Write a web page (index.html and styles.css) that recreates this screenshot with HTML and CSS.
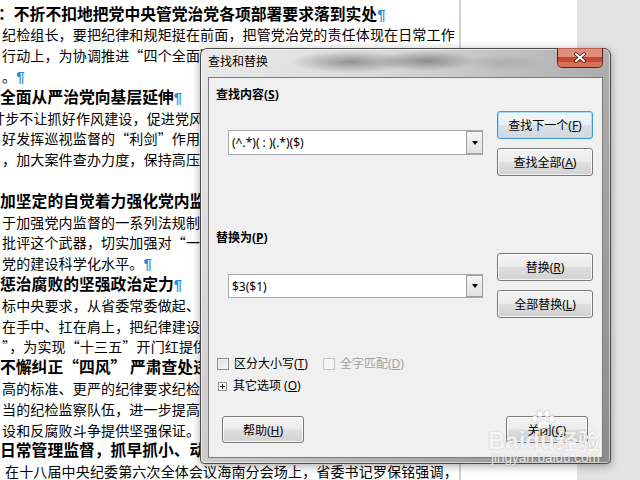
FILE: index.html
```html
<!DOCTYPE html>
<html lang="zh-CN">
<head>
  <meta charset="UTF-8">
  <title>查找和替换</title>
  <link rel="stylesheet" href="styles.css">
</head>
<body>
  <!-- Document behind the dialog -->
  <div class="screen">
    <div class="page">
      <p class="h lead">：不折不扣地把党中央管党治党各项部署要求落到实处<span class="pm">¶</span></p>
      <p>纪检组长，要把纪律和规矩挺在前面，把管党治党的责任体现在日常工作</p>
      <p>行动上，为协调推进“四个全面”战略布局提供坚强的纪律保障和政治保证</p>
      <p>。<span class="pm">¶</span></p>
      <p class="h">全面从严治党向基层延伸<span class="pm">¶</span></p>
      <p class="cut">寸步不让抓好作风建设，促进党风政风持续好转，营造风清气正的政治生态</p>
      <p>好发挥巡视监督的“利剑”作用，深化政治巡视，做到全覆盖、无死角</p>
      <p>，加大案件查办力度，保持高压态势，坚决遏制腐败现象蔓延势头</p>
      <p class="blank"></p>
      <p class="h">加坚定的自觉着力强化党内监督<span class="pm">¶</span></p>
      <p>于加强党内监督的一系列法规制度，用好批评和自我批评这个武器</p>
      <p>批评这个武器，切实加强对“一把手”和领导班子的监督，不断提高</p>
      <p>党的建设科学化水平。<span class="pm">¶</span></p>
      <p class="h">惩治腐败的坚强政治定力<span class="pm">¶</span></p>
      <p>标中央要求，从省委常委做起、从各级领导干部抓起，切实把管党治党</p>
      <p>在手中、扛在肩上，把纪律建设摆在更加突出位置，为全省经济社会发展</p>
      <p>”，为实现“十三五”开门红提供坚强有力的纪律保障。</p>
      <p class="h">不懈纠正“四风” 严肃查处违纪违法案件<span class="pm">¶</span></p>
      <p>高的标准、更严的纪律要求纪检监察干部，打造一支忠诚干净担当的队伍</p>
      <p>当的纪检监察队伍，进一步提高履职能力，为全面从严治党</p>
      <p>设和反腐败斗争提供坚强保证。<span class="pm">¶</span></p>
      <p class="h">日常管理监督，抓早抓小、动辄则咎<span class="pm">¶</span></p>
      <p class="last">在十八届中央纪委第六次全体会议海南分会场上，省委书记罗保铭强调，</p>
    </div>
    <div class="edge"></div>
    <div class="margin"></div>
    <div class="gutter"></div>
  </div>

  <!-- Find and replace dialog -->
  <div class="dialog">
    <div class="titlebar">
      <span class="title">查找和替换</span>
      <svg class="caption-x" width="46" height="20" viewBox="0 0 46 20">
        <path d="M0.5 0 V14.5 Q0.5 19.5 5.5 19.5 H40.5 Q45.5 19.5 45.5 14.5 V0 Z" fill="#c9492f" stroke="#5c2218"/>
        <path d="M1 0.5 H45 V9 H1 Z" fill="#de8d7a"/>
        <path d="M1 14 H45 V15 Q45 19 41 19 H5 Q1 19 1 15 Z" fill="#d8705a"/>
        <path d="M19 6 L27 13 M27 6 L19 13" stroke="#4a1911" stroke-width="3.6" stroke-linecap="round"/>
        <path d="M19 6 L27 13 M27 6 L19 13" stroke="#ffffff" stroke-width="2" stroke-linecap="round"/>
      </svg>
    </div>
    <div class="client">
      <div class="main">
        <div class="fields">
          <div class="label">查找内容(<u>S</u>)</div>
          <div class="combo find">
            <span class="value">(^.*)( : )(.*)($)</span>
            <span class="drop"><i></i></span>
          </div>
          <div class="label replace-label">替换为(<u>P</u>)</div>
          <div class="combo replace">
            <span class="value">$3($1)</span>
            <span class="drop"><i></i></span>
          </div>
          <div class="checks">
            <label class="check"><span class="box"></span><span>区分大小写(<u>T</u>)</span></label>
            <label class="check disabled"><span class="box"></span><span>全字匹配(<u>D</u>)</span></label>
          </div>
          <div class="more">
            <svg width="9" height="9" viewBox="0 0 9 9">
              <rect x="0.5" y="0.5" width="8" height="8" fill="#fafafa" stroke="#8f8f8f"/>
              <path d="M2 4.5 H7 M4.5 2 V7" stroke="#222" stroke-width="1"/>
            </svg>
            <span>其它选项 (<u>O</u>)</span>
          </div>
        </div>
        <div class="actions">
          <button class="btn default" type="button"><span>查找下一个(<u>F</u>)</span></button>
          <button class="btn" type="button"><span>查找全部(<u>A</u>)</span></button>
          <button class="btn gap" type="button"><span>替换(<u>R</u>)</span></button>
          <button class="btn" type="button"><span>全部替换(<u>L</u>)</span></button>
        </div>
      </div>
      <div class="footer">
        <button class="btn small" type="button"><span>帮助(<u>H</u>)</span></button>
        <button class="btn small" type="button"><span>关闭(<u>C</u>)</span></button>
      </div>
    </div>
  </div>

  <!-- Site watermark -->
  <div class="watermark">
    <svg class="paw" width="27" height="20" viewBox="0 0 27 20">
      <g fill="#fff" stroke="rgba(0,0,0,0.14)" stroke-width="1">
        <ellipse cx="5" cy="9" rx="3" ry="3.6"/>
        <ellipse cx="10" cy="3.8" rx="3" ry="3.4"/>
        <ellipse cx="17" cy="3.8" rx="3" ry="3.4"/>
        <ellipse cx="22" cy="9" rx="3" ry="3.6"/>
        <path d="M13.5 10 C9 10 6.5 15 8 18 C9.5 20 12 18.6 13.5 18.6 C15 18.6 17.5 20 19 18 C20.5 15 18 10 13.5 10 Z"/>
      </g>
    </svg>
    <div class="wm-logo"><span class="wm-bai">Baidu</span><span class="wm-jy">经验</span></div>
    <div class="wm-url">jingyan.baidu.com</div>
  </div>
</body>
</html>
```

FILE: styles.css
```css
html, body {
  margin: 0;
  padding: 0;
}

* {
  box-sizing: border-box;
}

body {
  width: 640px;
  height: 480px;
  overflow: hidden;
  position: relative;
  background: #e3e3e3;
}

/* Document page */
.screen {
  display: flex;
  width: 640px;
  height: 480px;
}

.page {
  width: 459px;
  flex: none;
  overflow: hidden;
  background: #fff;
  padding: 3.6px 0 0 2px;
  font-family: "Noto Sans CJK SC", sans-serif;
  font-size: 14px;
  letter-spacing: 0.15px;
  color: #000;
}
.page p {
  margin: 0;
  height: 20.8px;
  line-height: 20.8px;
  white-space: nowrap;
}
.page .h {
  font-size: 15.8px;
  font-weight: 700;
  letter-spacing: 0;
  margin-left: -2px;
}
.page .lead {
  margin-left: -4px;
}
.page .cut {
  margin-left: -11px;
}
.page .last {
  padding-left: 3px;
}
.pm {
  color: #2e8bd8;
  font-family: "Liberation Sans", sans-serif;
  font-weight: 700;
  font-size: 15px;
}

.edge {
  width: 2px;
  background: #d2d2d2;
}
.margin {
  width: 116px;
  background: #fff;
}
.gutter {
  flex: 1;
  background: #e3e3e3;
}

/* Dialog window */
.dialog {
  position: absolute;
  left: 200px;
  top: 48px;
  width: 411px;
  height: 416px;
  display: flex;
  flex-direction: column;
  border: 1px solid #4b4b4b;
  border-radius: 7px 7px 4px 4px;
  background:
    linear-gradient(to right, rgba(255, 255, 255, 0.35), rgba(255, 255, 255, 0) 40%, rgba(0, 0, 0, 0.22)),
    linear-gradient(#dedede, #b2b2b2);
  box-shadow: inset 0 0 0 1px rgba(255, 255, 255, 0.55), 0 2px 8px rgba(0, 0, 0, 0.35);
  font-family: "Noto Sans", "Noto Sans CJK SC", sans-serif;
  font-size: 12px;
  color: #000;
}

.titlebar {
  height: 28px;
  flex: none;
  display: flex;
  align-items: center;
  padding: 0 7px 2px 7px;
  border-radius: 6px 6px 0 0;
  background:
    radial-gradient(ellipse 60px 11px at 150px 13px, rgba(70, 70, 70, 0.5), transparent),
    radial-gradient(ellipse 50px 10px at 225px 12px, rgba(70, 70, 70, 0.5), transparent),
    radial-gradient(ellipse 40px 8px at 300px 14px, rgba(90, 90, 90, 0.2), transparent);
}
.title {
  line-height: 16px;
  text-shadow: 0 0 6px rgba(255, 255, 255, 0.9);
}
.caption-x {
  display: block;
  flex: none;
  margin: -1px 0 0 auto;
  align-self: flex-start;
}

.client {
  flex: 1;
  margin: 0 7px 5px;
  border: 1px solid #7b7b7b;
  background: #f0f0f0;
  display: flex;
  flex-direction: column;
  padding: 9px 9px 14px 7px;
}

.main {
  display: flex;
}

.fields {
  flex: 1;
  display: flex;
  flex-direction: column;
  align-items: flex-start;
}

.label {
  font-weight: 700;
  height: 16px;
  line-height: 16px;
}
.replace-label {
  margin-top: 75px;
}

.combo {
  margin: 27px 0 0 12px;
  width: 255px;
  height: 25px;
  display: flex;
  align-items: center;
  padding-left: 3px;
  border: 1px solid #a9abb0;
  background: #fff;
}
.combo.replace {
  margin-top: 28px;
  height: 24px;
}
.value {
  white-space: pre;
}
.drop {
  align-self: stretch;
  margin: 0 -1px 0 auto;
  width: 17px;
  display: flex;
  align-items: center;
  justify-content: center;
  border: 1px solid #9c9c9c;
  background: linear-gradient(#f4f4f4, #e2e2e2);
}
.drop i {
  width: 0;
  height: 0;
  border-left: 3.5px solid transparent;
  border-right: 3.5px solid transparent;
  border-top: 4px solid #000;
}

.checks {
  margin-top: 58px;
  height: 16px;
  display: flex;
  align-items: center;
  padding-left: 1px;
}
.check {
  display: flex;
  align-items: center;
  gap: 5px;
  line-height: 16px;
}
.check + .check {
  margin-left: 15px;
}
.box {
  width: 12px;
  height: 12px;
  border: 1px solid #8e8f8f;
  background: linear-gradient(135deg, #d8d8d8, #fbfbfb);
  box-shadow: inset 0 0 0 1px #f2f2f2;
}
.check.disabled {
  color: #a2a2a2;
}
.check.disabled .box {
  border-color: #c4c4c4;
  background: #f5f5f5;
}

.more {
  margin-top: 6px;
  height: 16px;
  display: flex;
  align-items: center;
  gap: 6px;
  padding-left: 2px;
  line-height: 16px;
}

.actions {
  width: 96px;
  flex: none;
  padding-top: 24px;
  display: flex;
  flex-direction: column;
  gap: 9px;
}
.actions .gap {
  margin-top: 68px;
}

.btn {
  height: 28px;
  padding: 0;
  display: flex;
  align-items: center;
  justify-content: center;
  font: inherit;
  color: #000;
  border: 1px solid #7a7a7a;
  border-radius: 3px;
  background: linear-gradient(#f3f3f3 0%, #ececec 48%, #dedede 52%, #d2d2d2 100%);
  box-shadow: inset 0 0 0 1px rgba(255, 255, 255, 0.75);
}
.btn.default {
  border-color: #3c9ae0;
  box-shadow: inset 0 0 0 1px #a8dcf8;
  background: linear-gradient(#f2f6f9 0%, #eaeff3 48%, #dbe1e6 52%, #d0d7dd 100%);
}
.btn.small {
  width: 82px;
  height: 27px;
}

.footer {
  margin-top: auto;
  display: flex;
  justify-content: space-between;
  padding: 0 5px 0 6px;
}

/* Watermark over the screenshot */
.watermark {
  position: absolute;
  left: 488px;
  top: 427px;
  color: rgba(255, 255, 255, 0.85);
  text-shadow: 0 0 1px rgba(0, 0, 0, 0.2), 0 0 3px rgba(0, 0, 0, 0.08);
  white-space: nowrap;
}
.paw {
  position: absolute;
  left: 42px;
  top: -17px;
  opacity: 0.85;
}
.wm-logo {
  height: 24px;
  line-height: 24px;
  display: flex;
  align-items: baseline;
}
.wm-bai {
  font-family: "Liberation Sans", sans-serif;
  font-size: 24px;
  font-weight: 700;
}
.wm-jy {
  margin-left: 1px;
  font-family: "Noto Sans CJK SC", sans-serif;
  font-size: 22px;
  font-weight: 700;
}
.wm-url {
  padding-left: 3px;
  font-family: "Liberation Sans", sans-serif;
  font-size: 13.5px;
  line-height: 14px;
}
```
